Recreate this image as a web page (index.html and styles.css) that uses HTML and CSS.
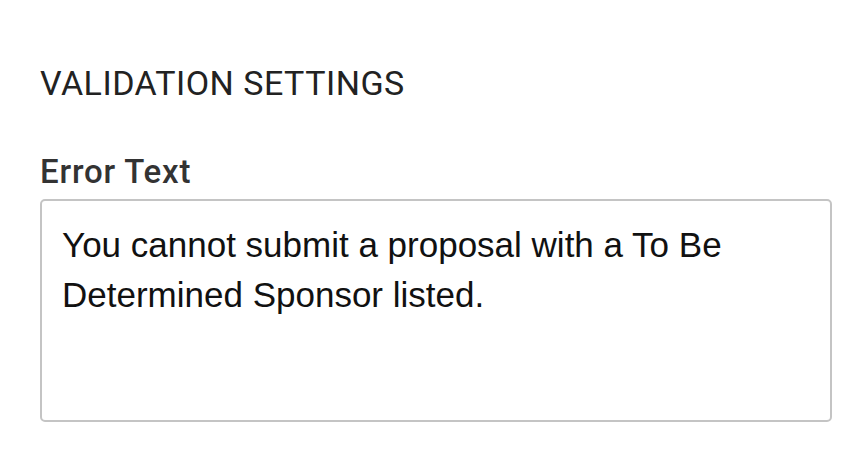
FILE: index.html
```html
<!DOCTYPE html>
<html lang="en">
<head>
<meta charset="UTF-8" />
<meta name="viewport" content="width=device-width, initial-scale=1" />
<title>Validation Settings</title>
<link rel="stylesheet" href="styles.css">
</head>
<body>
  <section class="settings">
    <h2 class="section-title">VALIDATION SETTINGS</h2>
    <div class="field">
      <label class="field-label" for="error-text">Error Text</label>
      <textarea class="field-input" id="error-text">You cannot submit a proposal with a To Be Determined Sponsor listed.</textarea>
    </div>
  </section>
</body>
</html>
```

FILE: styles.css
```css
:root {
  --text-color: #222222;
  --label-color: #333333;
  --border-color: #c4c4c4;
  --font-family: Roboto, 'Liberation Sans', sans-serif;
}

* {
  box-sizing: border-box;
}

body {
  margin: 0;
  background-color: #ffffff;
  color: var(--text-color);
  font-family: var(--font-family);
}

.settings {
  padding: 63px 37px 0 40px;
}

.section-title {
  margin: 0 0 49px;
  font-size: 34px;
  font-weight: 400;
  line-height: 40px;
  letter-spacing: 0.5px;
  color: var(--text-color);
}

.field {
  display: flex;
  flex-direction: column;
}

.field-label {
  font-size: 33px;
  font-weight: 500;
  line-height: 40px;
  letter-spacing: 0.8px;
  color: var(--label-color);
  margin-bottom: 7px;
}

.field-input {
  width: 792px;
  height: 223px;
  padding: 19px 20px;
  border: 2px solid var(--border-color);
  border-radius: 5px;
  font-family: 'Liberation Sans', Arial, sans-serif;
  font-size: 35px;
  line-height: 50px;
  color: #111111;
  resize: none;
}
```
